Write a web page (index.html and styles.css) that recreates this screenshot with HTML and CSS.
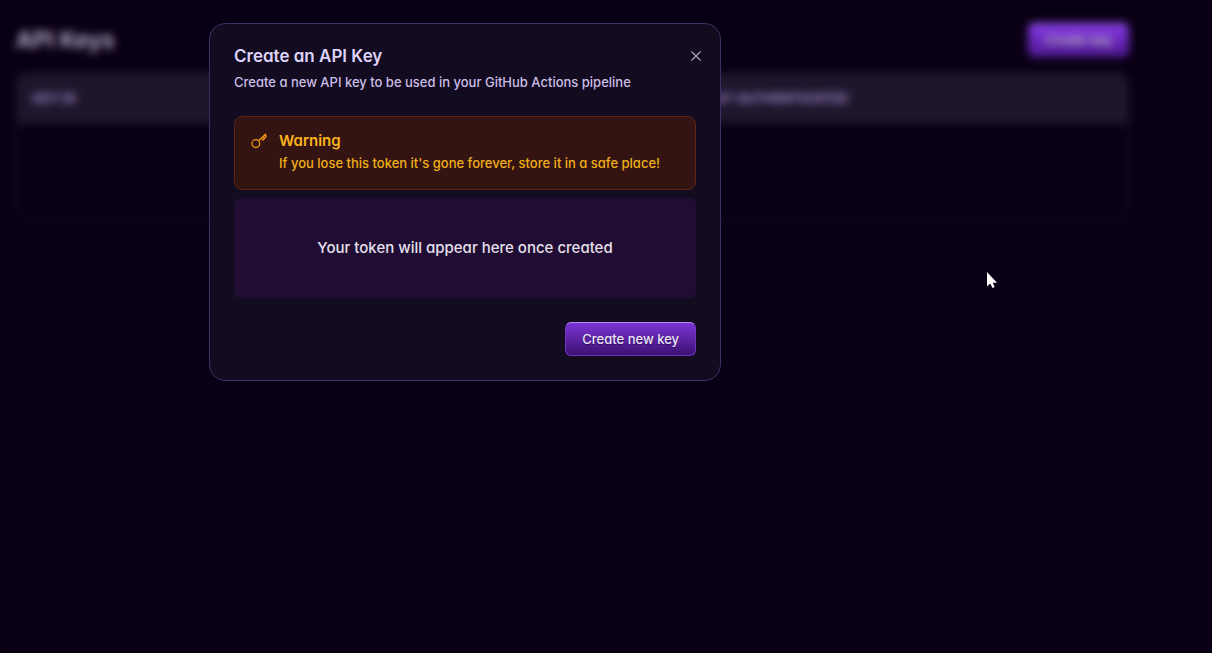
FILE: index.html
```html
<!DOCTYPE html>
<html lang="en">
<head>
<meta charset="utf-8">
<meta name="viewport" content="width=device-width, initial-scale=1">
<title>API Keys</title>
<link rel="stylesheet" href="styles.css">
</head>
<body>
<main class="page">
  <header class="page-header">
    <h1 class="page-title">API Keys</h1>
    <button class="button button-bright" type="button">Create key</button>
  </header>
  <div class="table-card">
    <table class="keys">
      <thead><tr><th class="col-id">Key ID</th><th>Last authenticated</th></tr></thead>
      <tbody><tr><td></td><td></td></tr></tbody>
    </table>
  </div>
</main>
<div class="overlay">
  <section class="dialog" role="dialog" aria-modal="true" aria-labelledby="dialog-title">
    <header class="dialog-header">
      <div class="dialog-heading">
        <h2 class="dialog-title" id="dialog-title">Create an API Key</h2>
        <p class="dialog-text">Create a new API key to be used in your GitHub Actions pipeline</p>
      </div>
      <button class="close" type="button" aria-label="Close">
        <svg viewBox="0 0 16 16" width="16" height="16" fill="none" stroke="currentColor" stroke-width="1.2" stroke-linecap="round"><path d="M3.8 3.8l8.4 8.4M12.2 3.8l-8.4 8.4"/></svg>
      </button>
    </header>
    <div class="warning" role="alert">
      <svg class="warning-icon" viewBox="0 0 16 16" width="16" height="16" fill="none" stroke="currentColor" stroke-width="1.3" stroke-linejoin="round" stroke-linecap="round"><circle cx="4.8" cy="10.6" r="3.9"/><path d="M7.6 7.8L14.4 1.2M10.3 5.2l1.7 1.9 1.3-1.2-.8-1.9 1.6.6 1.1-1.1-.8-2.3"/></svg>
      <div>
        <h3 class="warning-title">Warning</h3>
        <p class="warning-text">If you lose this token it's gone forever, store it in a safe place!</p>
      </div>
    </div>
    <div class="token"><p class="token-text">Your token will appear here once created</p></div>
    <footer class="actions"><button class="button" type="button">Create new key</button></footer>
  </section>
</div>
<svg class="cursor" viewBox="0 0 12 18" width="12" height="18" aria-hidden="true"><path fill="#fff" d="M1 1v14.5l3.2-3 2.3 4.4 2.2-1-2-4.1H11z"/></svg>
</body>
</html>
```

FILE: styles.css
```css
* { box-sizing: border-box; }
body {
  margin: 0;
  min-height: 100vh;
  background: #0a0015;
  color: #e2dcf5;
  font-family: Inter, "Liberation Sans", sans-serif;
  font-feature-settings: "cv11";
  font-size: 13px;
  font-weight: 500;
  line-height: 20px;
}
h1, h2, h3, p { margin: 0; }
.page { padding: 23px 83px 0 16px; }
.page-header { display: flex; align-items: center; justify-content: space-between; }
.page-title { font-size: 23px; line-height: 32px; font-weight: 600; color: #d2c9e8; }
.button {
  height: 34px;
  padding: 0 16px;
  border: 1px solid #6f35be;
  border-top-color: #b98af5;
  border-radius: 6px;
  background: linear-gradient(#7b34d6, #3c1272);
  color: #eee6fb;
  font: inherit;
  font-feature-settings: inherit;
  line-height: 30px;
  text-shadow: 0 1px 1px #2a0b55;
}
.button-bright { background: linear-gradient(#9440ff, #55189f); }
.table-card { margin-top: 16px; border: 1px solid #2b2038; border-radius: 10px; overflow: hidden; }
.keys { width: 100%; border-collapse: collapse; table-layout: fixed; }
.keys th {
  height: 50px;
  padding: 0 16px 2px;
  background: #21182f;
  color: #a995da;
  font-weight: 700;
  text-align: left;
  text-transform: uppercase;
}
.keys td { height: 94px; padding: 0; }
.col-id { width: 60%; }
.overlay {
  position: fixed;
  inset: 0;
  display: flex;
  align-items: flex-start;
  justify-content: center;
  padding: 23px 282px 23px 0;
  background: #08001218;
  backdrop-filter: blur(4px);
}
.dialog {
  width: 100%;
  max-width: 512px;
  padding: 20px 24px 24px;
  border: 1px solid #402d62;
  border-radius: 16px;
  background: #130b20;
}
.dialog-header { display: flex; justify-content: space-between; margin-bottom: 24px; }
.dialog-title { font-size: 17px; line-height: 24px; font-weight: 600; color: #ded3fb; }
.dialog-text { padding-top: 4px; color: #cbbfe7; }
.close {
  display: flex;
  align-self: flex-start;
  margin: 4px -8px 0 0;
  padding: 0;
  border: 0;
  background: none;
  color: #bdb7c7;
}
.warning {
  display: flex;
  gap: 12px;
  padding: 12px 16px 16px;
  border: 1px solid #5b2614;
  border-radius: 8px;
  background: #331413;
  color: #fbb31c;
}
.warning-icon { flex: none; margin-top: 4px; color: #f09413; }
.warning-title { font-size: 15px; line-height: 24px; font-weight: 600; }
.warning-text { color: #f0af18; }
.token {
  display: flex;
  align-items: center;
  justify-content: center;
  min-height: 100px;
  margin-top: 8px;
  border-radius: 6px;
  background: #210d33;
}
.token-text { font-size: 15px; line-height: 24px; color: #e5e0ec; }
.actions { display: flex; justify-content: flex-end; margin-top: 24px; }
.cursor { position: absolute; left: 986px; top: 271px; }
```
